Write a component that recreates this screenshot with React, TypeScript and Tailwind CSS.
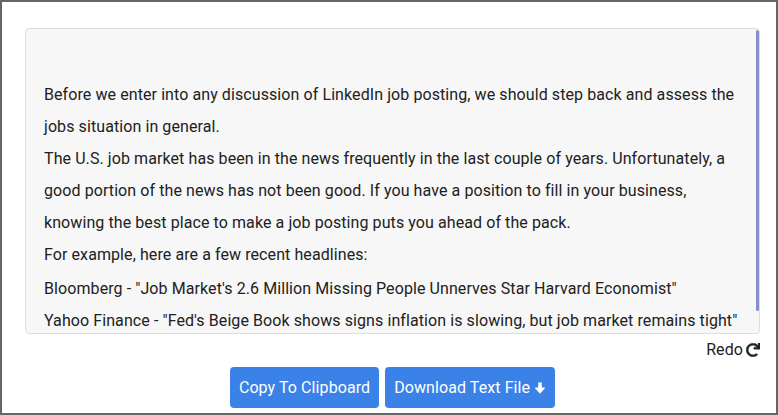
const paragraphs = [
  'Before we enter into any discussion of LinkedIn job posting, we should step back and assess the jobs situation in general.',
  'The U.S. job market has been in the news frequently in the last couple of years. Unfortunately, a good portion of the news has not been good. If you have a position to fill in your business, knowing the best place to make a job posting puts you ahead of the pack.',
  'For example, here are a few recent headlines:',
  'Bloomberg - "Job Market\'s 2.6 Million Missing People Unnerves Star Harvard Economist"',
  'Yahoo Finance - "Fed\'s Beige Book shows signs inflation is slowing, but job market remains tight"',
]

function RedoIcon() {
  return (
    <svg viewBox="0 0 512 512" className="h-[14px] w-[14px]" fill="currentColor" stroke="currentColor" strokeWidth="16">
      <path d="M500.33 0h-47.41a12 12 0 0 0-12 12.57l4 82.76A247.42 247.42 0 0 0 256 8C119.34 8 7.9 119.53 8 256.19 8.1 393.07 119.1 504 256 504a247.1 247.1 0 0 0 166.18-63.91 12 12 0 0 0 .48-17.43l-34-34a12 12 0 0 0-16.38-.55A176 176 0 1 1 402.1 157.8l-101.53-4.87a12 12 0 0 0-12.57 12v47.41a12 12 0 0 0 12 12h200.33a12 12 0 0 0 12-12V12a12 12 0 0 0-12-12z" />
    </svg>
  )
}

// chunky down arrow
function ArrowDown() {
  return (
    <svg viewBox="0 0 10 12" className="h-[12px] w-[10px]" fill="currentColor">
      <path d="M3.2 0.5h3.6v5h2.6c0.5 0 0.7 0.5 0.4 0.9L5.4 11.2c-0.2 0.3-0.6 0.3-0.8 0L0.2 6.4c-0.3-0.4-0.1-0.9 0.4-0.9h2.6z" />
    </svg>
  )
}

export default function App() {
  return (
    <div
      className="h-[415px] border-2 border-[#666666] bg-white pt-[26px] pl-[23px] pr-[16px] text-[#212121] tracking-[0.085px]"
      style={{ fontFamily: 'Roboto, "Noto Sans", sans-serif' }}
    >
      <div className="relative h-[306px] overflow-hidden rounded-[4px] border border-[#dddddd] bg-[#f7f7f7]">
        <div className="px-[18px] pt-[18px] text-[16px] leading-[32px]">
          <p>&nbsp;</p>
          {paragraphs.map((p, i) => (
            <p key={i} className={i === 3 ? 'mt-[2px]' : ''}>
              {p}
            </p>
          ))}
        </div>
        {/* scrollbar thumb */}
        <div className="absolute right-0 top-[1px] h-[281px] w-[3px] rounded-sm bg-[#8790c8]" />
      </div>

      <div className="mt-[4px] flex h-[24px] items-center justify-end gap-[3px] text-[16px] text-[#222]">
        <span>Redo</span>
        <RedoIcon />
      </div>

      <div className="mt-[5px] flex justify-center gap-[6px]">
        <button className="h-[41px] rounded-[4px] bg-[#3a81e8] px-[9px] text-[16px] text-white">
          Copy To Clipboard
        </button>
        <button className="flex h-[41px] items-center gap-[5px] rounded-[4px] bg-[#3a81e8] pl-[9px] pr-[10px] text-[16px] text-white">
          Download Text File
          <ArrowDown />
        </button>
      </div>
    </div>
  )
}
